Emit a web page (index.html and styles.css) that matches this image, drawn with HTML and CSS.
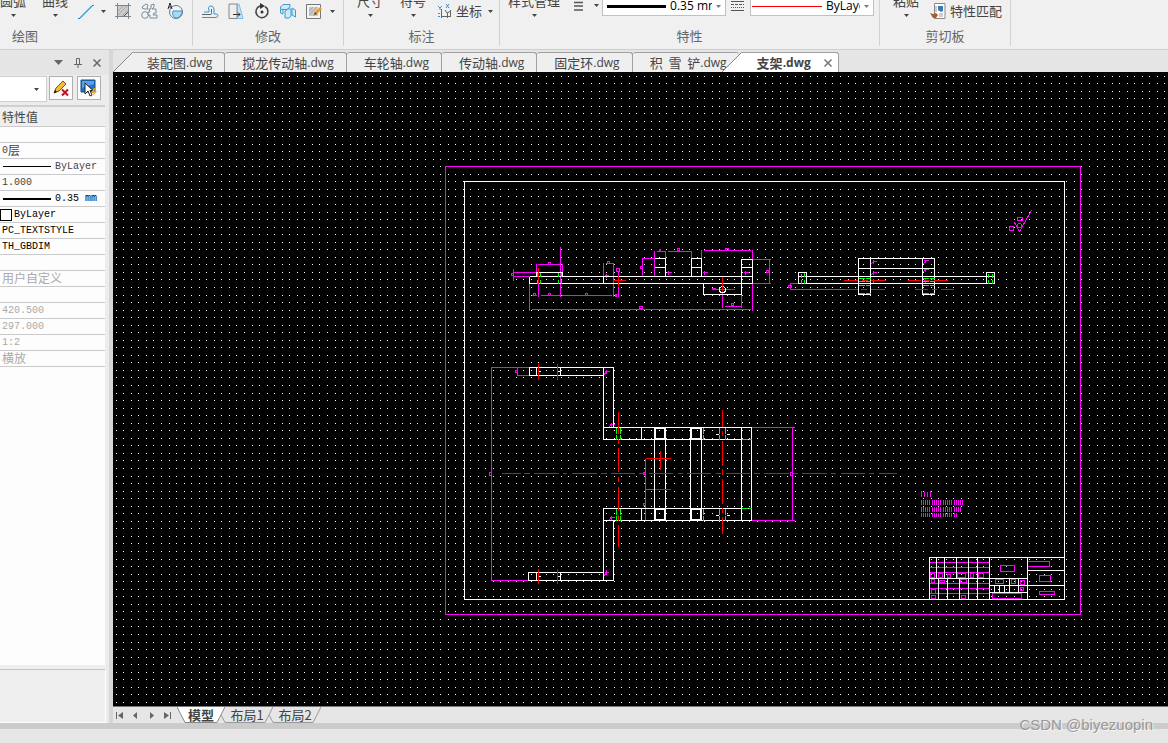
FILE: index.html
```html
<!DOCTYPE html>
<html lang="zh-CN">
<head>
<meta charset="utf-8">
<title>支架.dwg</title>
<link rel="stylesheet" href="styles.css">
</head>
<body>
<svg class="defs" width="0" height="0" aria-hidden="true">
  <symbol id="caret" viewBox="0 0 5 3"><path d="M0 0H5L2.5 3Z" fill="#444"/></symbol>
</svg>
<div class="app">
  <header class="ribbon">
    <section class="group draw">
      <div class="tools">
        <button class="big">圆弧<svg class="caret"><use href="#caret"/></svg></button>
        <button class="big">曲线<svg class="caret"><use href="#caret"/></svg></button>
        <button class="tool split" aria-label="直线"><svg width="18" height="18" viewBox="0 0 18 18"><path d="M3 16L15 4" stroke="#2aa5e8" stroke-width="1.5"/><path d="M1 16.500h2M15 3.500h2" stroke="#2a7fd0"/></svg><svg class="caret"><use href="#caret"/></svg></button>
        <button class="tool" aria-label="填充"><svg width="18" height="18" viewBox="0 0 18 18"><path d="M4 4H14V12L12 14H4Z" fill="#c9cbce"/><path d="M4 9L9 4M4 13L13 4M8 14L14 8" stroke="#aaa"/><path d="M1 3.500H17M1 14.500H17M3.500 1V17M14.500 1V17" stroke="#7c848c"/><path d="M14 10L10 14" stroke="#555"/></svg></button>
        <button class="tool" aria-label="块"><svg width="18" height="18" viewBox="0 0 18 18" fill="#f2f5f8" stroke="#7d8b99"><path d="M4 3.500L6 2L8 3L7 5L8 7H5L2 6L3 4Z"/><circle cx="5" cy="13" r="3.300"/><path d="M9 7H11V3L14 2V5L12 7H16V11H14L13 13H17V16H10V13H8V10H10Z"/></svg></button>
        <button class="tool" aria-label="区域"><svg width="18" height="18" viewBox="0 0 18 18"><circle cx="10" cy="10" r="6.500" fill="#eef5fb" stroke="#64788c"/><path d="M7 9H16C16 13 13 16 10 16C7 15 6 12 7 9Z" fill="#a5dcf5" stroke="#4a90c0"/><path d="M2 7L4 1L6 7M3 5H5" fill="none" stroke="#222"/></svg></button>
      </div>
      <h2>绘图</h2>
    </section>
    <section class="group modify">
      <div class="tools">
        <button class="tool" aria-label="偏移"><svg width="18" height="18" viewBox="0 0 18 18" fill="none"><path d="M1 15.500H15Q17 15 17 13.500T15 12H13V7Q12 3 9 4Q6 5 8 8V10H3" stroke="#3c93cf"/><path d="M1 12.500H10Q11 12 10.500 10.500V7" stroke="#59636c"/></svg></button>
        <button class="tool" aria-label="拉伸"><svg width="18" height="18" viewBox="0 0 18 18"><path d="M10 2H12L16 16.500H10Z" fill="#bfe6fa" stroke="#77c1e6"/><path d="M2 2H10V16.500H2Z" fill="#eee" stroke="#888"/><path d="M6 12.500H13M11 10.500L13 12.500L11 14.500" fill="none" stroke="#333"/></svg></button>
        <button class="tool" aria-label="旋转"><svg width="18" height="18" viewBox="0 0 18 18"><path d="M12 4.500A6 6 0 1 1 7 4" fill="none" stroke="#444" stroke-width="1.500"/><path d="M7 1L12 4L7 7Z" fill="#333"/><circle cx="9" cy="10" r="1.500" fill="#333"/></svg></button>
        <button class="tool" aria-label="分解"><svg width="18" height="18" viewBox="0 0 18 18" fill="#cfeafa" stroke="#3f9bd1"><path d="M1.500 5L4 2.500H11V5L8 7.500H1.500Z"/><path d="M1.500 8L4 7V12L1.500 11Z"/><path d="M6 9L9 7H12V14L10 16H6Z"/><path d="M13 6L16.500 8V15L13 13Z"/></svg></button>
        <button class="tool split" aria-label="编辑填充"><svg width="18" height="18" viewBox="0 0 18 18"><path d="M1.500 2.500H15.500V16.500H1.500Z" fill="#f5f5f5" stroke="#777"/><path d="M4 5H13V14H4Z" fill="#c8c8c8"/><path d="M4 9L8 5M4 13L12 5M8 14L13 9" stroke="#aaa"/><path d="M9 13L10 10L15 5L17 7L12 12Z" fill="#f29a1f"/><path d="M9 13L10 10L12 12Z" fill="#633"/></svg><svg class="caret"><use href="#caret"/></svg></button>
      </div>
      <h2>修改</h2>
    </section>
    <section class="group annotate">
      <div class="tools">
        <button class="big">尺寸<svg class="caret"><use href="#caret"/></svg></button>
        <button class="big">符号<svg class="caret"><use href="#caret"/></svg></button>
        <button class="tool split"><svg width="16" height="16" viewBox="0 0 16 16" fill="none"><path d="M4.500 6V15M4.500 13.500H14M8 7L10 10L14 8M10.500 10V15M13.500 7V14" stroke="#666"/><path d="M1 3L3 5L5 3M3 5V7M9 1L12 5M12 1L9 5M1 10.500H3M1 13.500H3" stroke="#3c8fd8"/></svg><span>坐标</span><svg class="caret"><use href="#caret"/></svg></button>
      </div>
      <h2>标注</h2>
    </section>
    <section class="group props">
      <div class="tools">
        <button class="big">样式管理<svg class="caret"><use href="#caret"/></svg></button>
        <button class="tool weight" aria-label="线宽"><svg width="10" height="12" viewBox="0 0 10 12"><path d="M0 2.500H9M0 6H9M0 10H9" stroke="#555" stroke-width="1.500"/></svg><svg class="caret"><use href="#caret"/></svg></button>
        <label class="combo"><svg width="59" height="3"><path d="M0 1.500H59" stroke="#000" stroke-width="3"/></svg><select aria-label="线宽"><option>0.35 mm</option></select><svg class="caret"><use href="#caret"/></svg></label>
        <button class="tool linetype" aria-label="线型"><svg width="13" height="12" viewBox="0 0 13 12" stroke="#555"><path d="M0 1.500H13M0 10.500H13"/><path d="M0 4.500H13" stroke-dasharray="3 1"/><path d="M0 7.500H13" stroke-dasharray="1 1"/></svg></button>
        <label class="combo"><svg class="red" width="70" height="1"><path d="M0 .5H70" stroke="#f00"/></svg><select class="short" aria-label="线型"><option>ByLayer</option></select><svg class="caret"><use href="#caret"/></svg></label>
      </div>
      <h2>特性</h2>
    </section>
    <section class="group clip">
      <div class="tools">
        <button class="big">粘贴<svg class="caret"><use href="#caret"/></svg></button>
        <button class="tool match"><svg width="16" height="16" viewBox="0 0 16 16"><path d="M4.500 .5H15V15.500H4.500Z" fill="#fff" stroke="#888"/><path d="M8 3H13V8L11 9L8 7Z" fill="#3979b8"/><path d="M6 3V9M9 11H13M9 13H13" stroke="#999"/><path d="M0 10L3 11L6 10L8 12L6 15H3Z" fill="#a6602a"/></svg><span>特性匹配</span></button>
      </div>
      <h2>剪切板</h2>
    </section>
  </header>

  <main class="workspace">
    <aside class="panel">
      <div class="panel-title">
        <button aria-label="菜单"><svg width="9" height="5"><path d="M0 0H9L4.500 5Z" fill="#666"/></svg></button>
        <button aria-label="固定"><svg width="8" height="10" fill="none" stroke="#666"><path d="M2.500 6V.5H5.500V6M0 6.500H8M4 7V10"/></svg></button>
        <button aria-label="关闭"><svg width="8" height="8"><path d="M.5 .5L7.500 7.500M7.500 .5L.5 7.500" stroke="#666" stroke-width="1.500"/></svg></button>
      </div>
      <div class="panel-tools">
        <label class="picker"><select aria-label="对象"><option></option></select><svg class="caret"><use href="#caret"/></svg></label>
        <button class="square" aria-label="清除"><svg width="18" height="18" viewBox="0 0 18 18"><path d="M2 14L4 9L11 2L14 5L7 12Z" fill="#f5bd36" stroke="#7a5510"/><path d="M2 14L3 11L5 13Z" fill="#111"/><path d="M10 10.500L16 16.500M16 10.500L10 16.500" stroke="#c8101a" stroke-width="2"/></svg></button>
        <button class="square" aria-label="快速选择"><svg width="18" height="18" viewBox="0 0 18 18"><path d="M1 1H15V13H1Z" fill="#2472c4" stroke="#174d8a"/><path d="M2 2H14V5L2 9Z" fill="#5ba0e0"/><path d="M5 4V15L8 12L10 17L12 16L10 11.500H13Z" fill="#fff" stroke="#222"/><path d="M14 9L11 14H14L12 18L17 12H14L16 9Z" fill="#f5a11c"/></svg></button>
      </div>
      <table class="values">
        <thead><tr><th>特性值</th></tr></thead>
        <tbody>
          <tr><td></td></tr>
          <tr><td>0<span class="cjk">层</span></td></tr>
          <tr><td><span class="sample"><svg width="49" height="1"><path d="M1 .5H49" stroke="#000"/></svg>ByLayer</span></td></tr>
          <tr><td>1.000</td></tr>
          <tr class="strong"><td><span class="sample"><svg width="49" height="2"><path d="M1 1H49" stroke="#000" stroke-width="2"/></svg>0.35 mm</span></td></tr>
          <tr class="strong"><td class="flush"><span class="swatch"></span>ByLayer</td></tr>
          <tr class="strong"><td>PC_TEXTSTYLE</td></tr>
          <tr class="strong"><td>TH_GBDIM</td></tr>
          <tr><td></td></tr>
          <tr class="off"><td><span class="cjk">用户自定义</span></td></tr>
          <tr><td></td></tr>
          <tr class="off"><td>420.500</td></tr>
          <tr class="off"><td>297.000</td></tr>
          <tr class="off"><td>1:2</td></tr>
          <tr class="off"><td><span class="cjk">横放</span></td></tr>
        </tbody>
      </table>
      <div class="blank"></div>
      <div class="hint"></div>
    </aside>

    <section class="editor">
      <nav class="tabs">
        <svg class="slant" width="20" height="20" viewBox="0 0 20 20"><path d="M0 20L20 0V20Z" fill="#efefef"/><path d="M0 20L19.500 .5H20" fill="none" stroke="#888"/></svg>
        <button class="tab first">装配图<span>.dwg</span></button>
        <button class="tab">搅龙传动轴<span>.dwg</span></button>
        <button class="tab">车轮轴<span>.dwg</span></button>
        <button class="tab">传动轴<span>.dwg</span></button>
        <button class="tab">固定环<span>.dwg</span></button>
        <button class="tab last">积  雪  铲<span>.dwg</span></button>
        <svg class="slant over" width="20" height="20" viewBox="0 0 20 20"><path d="M0 20L20 0V20Z" fill="#fff"/><path d="M0 20L19.500 .5H20" fill="none" stroke="#888"/></svg>
        <button class="tab active">支架<span>.dwg</span><svg width="8" height="8"><path d="M.5 .5L7.500 7.500M7.500 .5L.5 7.500" stroke="#777" stroke-width="1.500"/></svg></button>
      </nav>
      <div class="canvas">
        <svg class="drawing" width="100%" height="100%" shape-rendering="crispEdges" fill="none">
          <path id="grid" fill="#fff"/>
          <g transform="translate(-112.5 -71.5)">
            <g stroke="#f0f">
              <path d="M445 166H1080V614H445Z"/>
              <path d="M560 246V296M536 263V272M562 263V272M537 264H560M548 262H550V264H548ZM512 272H536M512 276H529M513 268V280M511 273H513V275H511ZM538 283V296M531 295H536M540 295H559M561 295H611M533 293H535V295H533ZM548 293H550V295H548ZM585 293H587V295H585ZM615 293V296M616 293V296M529 283V310M531 309H750M639 306H642V308H639ZM752 249V259M752 283V310"/>
              <path d="M603 262V276M613 262V296M605 263H612M607 261H609V263H607ZM618 286V296M618 270V275M616 268H619V271H616ZM654 250V276M665 250V276M691 250V258M656 251H664M667 251H690M659 248V251M660 248V251M677 248H679V250H677ZM701 249V276M703 250H750M725 248H728V250H725Z"/>
              <path d="M641 258H654M641 276H655M642 258V276M640 266H642V268H640ZM752 259H770M769 259V283M752 283H770M766 270H768V272H766ZM722 291V307M741 272V307M724 306H740M731 303H733V305H731ZM711 289H730M711 288H715"/>
              <path d="M666 272H671M668 270V274M702 272H707M704 270V274M743 272H748M745 270V274M604 275H608M606 273V277"/>
              <path d="M843 289H790V283H798M788 285H791V287H788ZM872 261H876M873 259V263M872 272H876M873 270V274M872 280H876M873 278V282M923 260H928M925 259V262M923 269H928M925 267V271M923 280H928M925 278V282M870 264L873 261M870 275L873 272M922 264L925 261M922 272L925 269"/>
              <path d="M1014 222L1019 231L1031 210M1017 217H1022V220H1017ZM1009 226H1013V230H1009Z"/><circle cx="1019" cy="225" r="2"/>
              <path d="M529 367H491V580H528M517 367V375H529M515 370H517V372H515ZM489 472H491V475H489ZM604 371H609M606 369V373M603 375L606 371M609 424H614M611 422V426M608 427L611 424M609 517H614M611 515V519M608 520L611 517M604 572H608M606 569V574M603 576L606 572"/>
              <path d="M645 458V520M644 489H654M644 520H655M643 472H645V474H643ZM643 503H645V505H643ZM751 427H792V520H751M792 427H794M792 520H794M790 472H792V475H790Z"/>
              <path d="M929 562H989M929 567H989M929 572H989M929 583H989M929 588H989M929 593H989M1000 565H1014V571H1000ZM1027 561H1049V566H1027ZM1039 575H1050V581H1039ZM1039 591H1054V594H1039ZM992 593H1021V598H992ZM995 579H1003V583H995ZM1011 579H1015V583H1011ZM1020 580H1024V584H1020ZM1020 587H1023V590H1020Z"/>
              <path d="M930 573H934V577H930ZM938 573H942V577H938ZM947 574H950V577H947ZM957 573H965V577H957ZM970 573H973V577H970ZM978 573H983V577H978ZM931 579H934V582H931ZM939 580H944V582H939ZM960 579H966V582H960ZM931 589H935V593H931ZM931 595H935V598H931ZM961 595H965V598H961Z"/>
              <path d="M921 490V496M924 491V496M927 491V496M930 490V496"/>
              <g stroke-dasharray="1 1 1 1 1 1 1 1 1 2">
                <path stroke-width="5" d="M920.5 501.5H963M920.5 508.500H960"/>
                <path stroke-width="4" d="M920.5 514.500H957"/>
              </g>
            </g>
            <g stroke="#fff">
              <path d="M464 181H1064V599H464Z"/>
              <path d="M529 276H752M529 283H752M529 276V283M752 259V283M536 276V272H562V276M603 276V283M654 258H665M665 258V276M654 267H665M691 276V258H701V276M691 267H701M741 294V259H752M741 267H752M703 283V294H741"/>
              <circle cx="722" cy="289" r="3"/>
              <path d="M798 276H994M798 283H994M798 283V272H806V283M986 283V272H994V283M858 294V258H934V294M858 268H934M870 258V294M922 258V294M858 294H870M922 294H934"/>
              <path d="M529 375V367H613V427M529 375H603M536 367V375M560 367V375M603 367V439H751V427H603M641 427V439M603 580V508H751V520H603M641 508V520M613 520V580H528V572H603M536 572V580M560 572V580M654 427V520M665 427V520M690 427V520M701 427V520M741 427V520M751 427V520"/>
              <path d="M655 428H664V438H655ZM691 428H700V438H691ZM655 509H664V519H655ZM691 509H700V519H691Z"/>
              <path d="M716 433V434H718M727 433V434H729M716 514V515H718M727 514V515H729M537 371H540M556 371H559M537 576H540M556 576H559"/>
              <path d="M929 599V557H1064M936 557V578M944 557V578M956 557V578M968 557V599M977 557V599M989 557V599M929 578H1027M938 578V599M947 578V599M959 578V599M1027 557V599M1027 570H1064M989 585H1064M989 592H1027M1009 578V592M1018 578V592M994 585V592M999 585V592M1004 585V592"/>
            </g>
            <g stroke="#0f0">
              <path d="M537 272V276M540 272V276M558 272V276M561 272V276M537 279V283M540 279V283M558 279V283M561 279V283"/>
              <path d="M801 273V277M804 272V276M801 279V283M804 279V283M988 273V277M992 273V277M988 279V283M992 279V283"/>
              <path stroke-dasharray="6 1" d="M858 278H870M858 281H870M858 285H870M858 293H870M922 278H934M922 281H934M922 285H934M922 293H934M616 427V439M620 427V439M616 508V520M620 508V520M703 427V439M703 508V520M719 427V439M725 427V439M719 508V520M725 508V520M741 439H751M741 508H751"/>
            </g>
            <g stroke="#f00">
              <path d="M538 267V283M618 274V286M612 280H625M722 276V291M730 289H734"/>
              <path d="M843 280H857M861 280H867M870 280H885M907 280H920M924 280H929M933 280H947M843 289H857M860 289H866M870 289H884M914 289H927M931 289H936M940 289H953"/>
              <path d="M538 363V379M557 363V379M538 568V583M557 568V583"/>
              <path d="M618 411V433M618 438V443M618 447V471M618 476V481M618 486V510M618 514V520M618 524V546M722 409V426M722 430V435M722 440V465M722 468V474M722 478V503M722 507V512M722 516V533"/>
              <path d="M501 473H520M523 473H529M533 473H558M562 473H566M571 473H596M600 473H606M610 473H634M638 473H644M648 473H672M677 473H682M686 473H710M715 473H720M725 473H749M753 473H759M763 473H788M792 473H797M801 473H826M830 473H835M840 473H864M868 473H873M878 473H896"/>
              <path d="M645 458H670M654 489H670M660 450V469"/>
            </g>
          </g>
        </svg>
      </div>
      <nav class="layouts">
        <button aria-label="第一个"><svg width="7" height="7"><path d="M.5 0V7" stroke="#666"/><path d="M7 0V7L2 3.500Z" fill="#666"/></svg></button>
        <button aria-label="上一个"><svg width="7" height="7"><path d="M5 0V7L1 3.500Z" fill="#666"/></svg></button>
        <button aria-label="下一个"><svg width="7" height="7"><path d="M2 0V7L6 3.500Z" fill="#666"/></svg></button>
        <button aria-label="最后一个"><svg width="7" height="7"><path d="M0 0V7L5 3.500Z" fill="#666"/><path d="M6.500 0V7" stroke="#666"/></svg></button>
        <button class="sheet current"><svg width="48" height="16" viewBox="0 0 48 16"><path d="M0 0L8 15.500H40L48 0" fill="#fff" stroke="#888"/></svg><span>模型</span></button>
        <button class="sheet"><svg width="52" height="16" viewBox="0 0 52 16"><path d="M0 8L4 15.500H44L52 0" fill="none" stroke="#999"/></svg><span>布局1</span></button>
        <button class="sheet"><svg width="52" height="16" viewBox="0 0 52 16"><path d="M0 8L4 15.500H44L52 0" fill="none" stroke="#999"/></svg><span>布局2</span></button>
      </nav>
    </section>
  </main>
  <footer class="status"><span class="credit">CSDN @biyezuopin</span></footer>
</div>
<script src="grid.js"></script>
</body>
</html>
```
FILE: styles.css
```css
* { box-sizing: border-box; }
body {
  margin: 0;
  background: #e6e6e6;
  color: #444;
  font: 13px/16px "Noto Sans CJK SC", sans-serif;
}
button, select {
  margin: 0;
  padding: 0;
  border: 0;
  background: none;
  color: inherit;
  font: inherit;
  white-space: pre;
}
select { appearance: none; outline: none; }
svg { display: block; flex: none; }
.defs { position: absolute; }
.caret { width: 5px; height: 3px; }
.app { display: flex; flex-direction: column; height: 100vh; overflow: hidden; }

/* ribbon */
.ribbon {
  display: flex;
  flex: none;
  height: 50px;
  overflow: hidden;
  background: #f0f0f0;
  border-bottom: 1px solid #cfcfcf;
}
.group { height: 46px; border-right: 1px solid #d2d2d2; }
.group h2 {
  margin: 6px 0 0;
  font-size: 13px;
  font-weight: normal;
  line-height: 16px;
  text-align: center;
  color: #666;
}
.draw h2 { text-align: left; padding-left: 12px; }
.tools { display: flex; align-items: flex-end; height: 22px; }
.big { display: flex; flex-direction: column; align-items: center; gap: 5px; padding-bottom: 5px; flex: none; }
.tool { display: flex; align-items: center; height: 22px; gap: 4px; flex: none; }
.tool.split .caret { margin-left: 3px; }
.draw .tools { gap: 8px; padding-right: 8px; }
.draw .big + .big { margin: 0 1px 0 8px; }
.draw .tool.split .caret { margin-left: 2px; }
.modify .tools { gap: 8px; padding: 0 8px; }
.annotate .tools { padding: 0 6px 0 13px; }
.annotate .big { margin-right: 17px; }
.annotate .split { margin-left: -6px; gap: 3px; }
.props .tools { padding: 0 5px 0 8px; }
.weight { margin: 0 3px 11px 14px; height: 11px; gap: 10px; }
.linetype { margin: 0 6px 11px 5px; height: 11px; }
.clip .tools { padding: 0 8px 0 13px; gap: 11px; }
.combo {
  display: flex;
  align-items: center;
  width: 124px;
  height: 20px;
  margin-bottom: 6px;
  padding: 0 4px;
  background: #fff;
  border: 1px solid #c0c0c0;
}
.combo svg:first-child { margin-right: 4px; }
.combo .red { margin-left: -3px; }
.combo select { width: 42px; overflow: hidden; color: #000; font: 12px/16px "Open Sans", sans-serif; text-overflow: clip; }
.combo .short { width: 34px; }
.combo .caret { margin-left: auto; opacity: .7; }

/* property panel */
.workspace { display: flex; flex: 1; min-height: 0; }
.panel {
  display: flex;
  flex-direction: column;
  width: 113px;
  flex: none;
  padding-right: 3px;
  background: #ececec;
  border-right: 4px solid #d6d6d6;
}
.panel-title { display: flex; align-items: center; justify-content: flex-end; gap: 11px; height: 25px; padding-right: 8px; margin-right: -3px; background: #e5e5e5; }
.panel-title button { display: flex; }
.panel-tools { display: flex; gap: 4px; height: 30px; padding-top: 1px; }
.picker { display: flex; align-items: center; width: 47px; height: 26px; padding-right: 7px; background: #fff; border: 1px solid #cfcfcf; border-left: 0; }
.picker select { flex: 1; min-width: 0; }
.square { display: flex; align-items: center; justify-content: center; width: 24px; height: 24px; margin-left: -2px; background: #fcfcfc; border: 1px solid #b0b0b0; }
.square + .square { margin-left: 0; }
.values { width: 105px; border-collapse: separate; border-spacing: 0; background: #fdfdfd; border-top: 2px solid #d0d0d0; font: 10px/15px "Liberation Mono", "Noto Sans CJK SC", monospace; }
.values td, .values th { height: 16px; padding: 0 0 0 2px; border-bottom: 1px solid #cacaca; white-space: nowrap; }
.values th { height: 20px; background: #efefef; font: 12px/18px "Noto Sans CJK SC", sans-serif; text-align: left; }
.values .flush { display: flex; align-items: center; gap: 2px; padding: 0; }
.values .cjk { display: inline-block; vertical-align: top; font: 12px/14px "Noto Sans CJK SC", sans-serif; }
.sample { display: flex; align-items: center; gap: 4px; }
.strong { color: #000; }
.off { color: #aaa; }
.swatch { width: 12px; height: 12px; border: 1px solid #000; background: #fff; }
.blank { flex: 1; width: 105px; background: #fdfdfd; }
.hint { width: 106px; height: 57px; border-top: 1px solid #c4c4c4; border-right: 1px solid #fff; border-bottom: 1px solid #fff; background: #efefef; box-shadow: 0 -4px 0 #efefef; height: 54px; }

/* document tabs */
.editor { display: flex; flex: 1; flex-direction: column; min-width: 0; }
.tabs { display: flex; flex: none; padding-top: 2px; background: #e5e5e5; }
.tab { display: flex; align-items: center; height: 20px; padding: 0 12px 0 17px; background: #efefef; border: 1px solid #a0a0a0; border-width: 1px 1px 0 0; border-radius: 3px 3px 0 0; }
.tab span { font: 12px/16px "Open Sans", sans-serif; }
.tab.first { padding-left: 14px; border-top-left-radius: 0; }
.tab.last { border-right: 0; }
.slant.over { position: relative; margin-left: -17px; }
.tab.active { padding: 0 6px 0 15px; background: #fff; font-weight: bold; border-top-left-radius: 0; }
.tab.active span { font-weight: bold; }
.tab.active svg { margin-left: 13px; }
.canvas { flex: 1; min-height: 0; overflow: hidden; background: #000; }

/* layout tabs */
.layouts { display: flex; align-items: center; flex: none; height: 17px; padding-left: 3px; background: #e6e6e6; border-top: 1px solid #777; }
.layouts button { display: flex; flex: none; margin-right: 9px; }
.layouts .sheet { display: grid; place-items: center; margin-right: -4px; line-height: 16px; height: 16px; }
.layouts .sheet > * { grid-area: 1 / 1; }
.layouts .current { margin-left: -3px; font-weight: bold; }

.status { display: flex; justify-content: flex-end; flex: none; height: 20px; padding-right: 15px; border-top: 6px solid #cbcbcb; background: #e6e6e6; }
.credit { position: relative; top: -13px; font: 15px/18px "Liberation Sans", sans-serif; color: #999; text-shadow: 1px 1px 0 #f4f4f4; }
```
FILE: grid.js
```js
const grid = document.getElementById("grid");
const step = 7.545;

function drawGrid() {
  const area = grid.ownerSVGElement.getBoundingClientRect();
  let d = "";
  for (let y = 4.2; y < area.height; y += step) {
    for (let x = 3.2; x < area.width; x += step) {
      d += `M${Math.floor(x)} ${Math.floor(y)}h1v1h-1z`;
    }
  }
  grid.setAttribute("d", d);
}

drawGrid();
window.addEventListener("resize", drawGrid);
```
